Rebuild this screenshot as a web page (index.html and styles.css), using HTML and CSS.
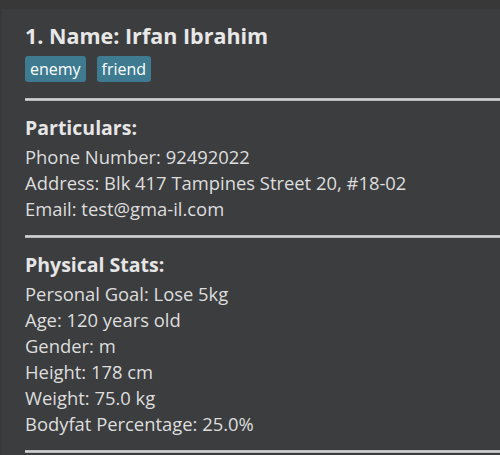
FILE: index.html
```html
<!DOCTYPE html>
<html>
<head>
<meta charset="utf-8">
<link rel="stylesheet" href="styles.css">
</head>
<body>
<div class="card">
  <div class="title">1. Name: Irfan Ibrahim</div>
  <div class="tags">
    <span class="tag">enemy</span>
    <span class="tag">friend</span>
  </div>
  <div class="sep"></div>
  <div class="section">
    <div class="heading">Particulars:</div>
    <div class="lines">
      <div class="line">Phone Number: 92492022</div>
      <div class="line">Address: Blk 417 Tampines Street 20, #18-02</div>
      <div class="line">Email: test@gma-il.com</div>
    </div>
  </div>
  <div class="sep"></div>
  <div class="section">
    <div class="heading">Physical Stats:</div>
    <div class="lines">
      <div class="line">Personal Goal: Lose 5kg</div>
      <div class="line">Age: 120 years old</div>
      <div class="line">Gender: m</div>
      <div class="line">Height: 178 cm</div>
      <div class="line">Weight: 75.0 kg</div>
      <div class="line">Bodyfat Percentage: 25.0%</div>
    </div>
  </div>
  <div class="sep"></div>
</div>
</body>
</html>
```
FILE: styles.css
```css
html, body {
  margin: 0;
  padding: 0;
  background: #383838;
  overflow: hidden;
  width: 500px;
  height: 455px;
}
body {
  font-family: "Open Sans", "Noto Sans", sans-serif;
  color: #dedede;
}
.card {
  margin: 9px 0 0 2px;
  height: 446px;
  background: #3c3d3f;
  padding: 14px 0 0 23px;
  box-sizing: border-box;
}
.title {
  font-size: 21.5px;
  font-weight: 700;
  line-height: 26px;
  color: #e8e8e8;
}
.tags {
  display: flex;
  gap: 11px;
  margin-top: 7px;
}
.tag {
  background: #3e7b91;
  color: #ffffff;
  font-size: 16px;
  line-height: 26px;
  height: 26px;
  padding: 0 5px;
  border-radius: 3px;
}
.sep {
  height: 3px;
  margin-top: 16px;
  background: linear-gradient(#bcbcbc 0 1px, #d2d2d2 1px 2px, #b4b4b4 2px 3px);
}
.section {
  margin-top: 14px;
  margin-bottom: -3px;
}
.heading {
  font-size: 19.5px;
  font-weight: 700;
  line-height: 26px;
  color: #e6e6e6;
}
.lines {
  margin-top: 3px;
}
.line {
  font-size: 18.4px;
  line-height: 26px;
}
```
